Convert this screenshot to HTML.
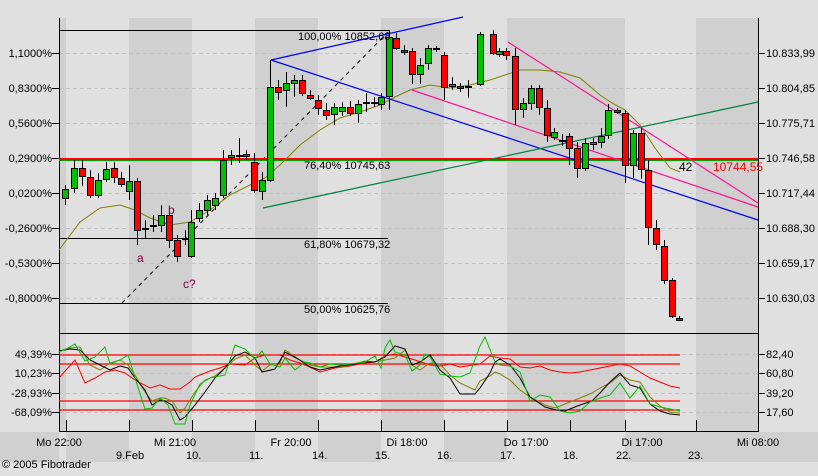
<!DOCTYPE html><html><head><style>
body{margin:0;background:#e0e0e0;width:818px;height:471px;overflow:hidden;font-family:"Liberation Sans",sans-serif}
svg text{font-family:"Liberation Sans",sans-serif;font-size:11px;fill:#000}
svg text.p{fill:#800040;font-size:12px}
</style></head><body>
<svg id="s" width="818" height="471" xmlns="http://www.w3.org/2000/svg">
<rect width="818" height="471" fill="#e0e0e0"/>
<g fill="#d0d0d0">
<rect x="59" y="18" width="7" height="414"/><rect x="129" y="18" width="63" height="414"/><rect x="255" y="18" width="63" height="414"/><rect x="381" y="18" width="63" height="414"/><rect x="507" y="18" width="118" height="414"/><rect x="696" y="18" width="62" height="414"/>
<rect x="0" y="432" width="59" height="30"/><rect x="66" y="432" width="63" height="30"/><rect x="192" y="432" width="63" height="30"/><rect x="318" y="432" width="63" height="30"/><rect x="444" y="432" width="63" height="30"/><rect x="625" y="432" width="71" height="30"/><rect x="696" y="432" width="122" height="30"/>
</g>
<g stroke="#c4c4c4" stroke-dasharray="4,3" stroke-width="1">
<path d="M59 53.5H758M59 88.5H758M59 123.5H758M59 158.5H758M59 193.5H758M59 228.5H758M59 263.5H758M59 298.5H758M59 354.5H758M59 373.5H758M59 393.5H758M59 412.5H758"/>
</g>
<g stroke="#000" fill="none">
<path d="M59.5 18V432M758.5 18V432M59 333.5H758M59 431.5H758"/>
<path d="M59 30.5H390M59 238.5H388M59 303.5H388M59 158.5H388"/>
<path d="M66.5 420V432M129.5 420V432M192.5 420V432M255.5 420V432M318.5 420V432M381.5 420V432M444.5 420V432M507.5 420V432M570.5 420V432M625.5 420V432M696.5 420V432"/>
<path d="M52 53.5H59M52 88.5H59M52 123.5H59M52 158.5H59M52 193.5H59M52 228.5H59M52 263.5H59M52 298.5H59M758 53.5H765M758 88.5H765M758 123.5H765M758 158.5H765M758 193.5H765M758 228.5H765M758 263.5H765M758 298.5H765M52 354.5H59M52 373.5H59M52 393.5H59M52 412.5H59M758 354.5H765M758 373.5H765M758 393.5H765M758 412.5H765"/>
<path d="M122 303L390 30" stroke-dasharray="4,4"/>
</g>
<path d="M59 160.5H758" stroke="#00a000" stroke-width="1"/>
<path d="M59 159H758" stroke="#ff0000" stroke-width="2"/>
<path d="M59 250L80 222L100 208L120 205L135 210L150 218L170 225L190 222L210 210L230 195L250 185L265 178L280 165L300 145L320 130L340 118L360 112L380 105L395 97L410 90L430 85L450 88L470 85L490 80L505 75L520 70L540 70L560 72L580 78L600 95L612 103L625 110L640 125L655 148L670 168L680 172" stroke="#808000" fill="none"/>
<g fill="none" stroke-width="1.2">
<path d="M271 60L463 17M271 60L758 220" stroke="#0000ff"/>
<path d="M412 90L758 207M508 42L758 203" stroke="#ff1493"/>
<path d="M263 208L758 102" stroke="#008040"/>
</g>
<g id="c"></g>
<text class="p" x="137" y="262">a</text><text class="p" x="168" y="214">b</text><text class="p" x="183" y="288">c?</text>
<text x="298" y="40">100,00% 10852,68</text><text x="304" y="169">76,40% 10745,63</text><text x="304" y="248">61,80% 10679,32</text><text x="304" y="313">50,00% 10625,76</text>
<text x="679" y="171" style="font-size:12px">42</text><text x="713" y="171" style="font-size:12px;fill:#ff0000">10744,55</text>
<g text-anchor="end"><text x="52" y="57">1,1000%</text><text x="52" y="92">0,8300%</text><text x="52" y="127">0,5600%</text><text x="52" y="162">0,2900%</text><text x="52" y="197">0,0200%</text><text x="52" y="232">-0,2600%</text><text x="52" y="267">-0,5300%</text><text x="52" y="302">-0,8000%</text>
<text x="52" y="358">49,39%</text><text x="52" y="377">10,23%</text><text x="52" y="397">-28,93%</text><text x="52" y="416">-68,09%</text></g>
<g><text x="766" y="57">10.833,99</text><text x="766" y="92">10.804,85</text><text x="766" y="127">10.775,71</text><text x="766" y="162">10.746,58</text><text x="766" y="197">10.717,44</text><text x="766" y="232">10.688,30</text><text x="766" y="267">10.659,17</text><text x="766" y="302">10.630,03</text>
<text x="766" y="358">82,40</text><text x="766" y="377">60,80</text><text x="766" y="397">39,20</text><text x="766" y="416">17,60</text></g>
<g stroke="#ff0000" stroke-width="1.3"><path d="M59 355H680M59 364H680M59 401H680M59 410H680"/></g>
<g fill="none" stroke-width="1">
<path d="M59 378L66 370L75 360L85 383L95 378L105 372L115 370L125 373L135 380L150 388L160 385L170 389L180 389L190 382L195 377L200 375L210 371L220 368L230 364L245 365L255 358L265 355L280 355L290 360L300 363L310 367L320 372L335 368L350 366L365 363L375 362L385 356L395 354L405 357L415 360L430 365L440 366L450 364L460 367L480 364L490 356L500 358L510 359L520 367L530 368L540 366L550 370L560 372L570 373L580 372L590 370L600 368L610 366L620 364L630 366L640 372L650 378L660 382L670 386L680 388" stroke="#ff0000"/>
<path d="M59 351L70 348L80 347L90 365L100 370L110 363L120 360L128 365L135 375L145 392L152 401L160 398L165 398L172 401L180 413L185 408L195 392L205 380L215 376L225 368L235 359L245 355L255 365L262 371L270 365L280 363L285 350L300 360L310 365L320 367L340 367L350 365L365 361L375 362L385 360L395 358L405 350L412 365L420 370L430 363L440 364L450 375L460 383L475 390L480 381L490 376L495 372L500 374L510 380L520 390L530 397L545 405L555 408L565 404L580 398L592 393L600 388L610 383L620 375L630 380L640 382L650 397L660 406L670 412L680 413" stroke="#808000"/>
<path d="M59 351L70 349L80 350L90 360L100 365L110 370L120 366L128 368L135 378L145 390L152 405L160 400L165 401L172 405L180 420L185 417L195 405L205 392L215 378L225 368L235 356L245 352L255 358L262 372L275 369L285 352L298 359L310 367L320 370L340 366L355 364L365 362L375 362L385 357L395 346L405 349L412 365L420 362L430 355L440 370L450 378L460 394L475 394L480 388L490 373L495 362L500 359L510 365L520 378L530 397L545 407L556 410L565 411L580 405L592 401L600 393L610 382L620 373L630 385L640 388L650 404L660 411L670 414L680 415" stroke="#000"/>
<path d="M59 352L66 349L75 344L85 361L95 357L105 347L110 364L120 360L128 355L135 378L145 409L152 408L160 398L168 405L175 424L185 424L190 405L200 384L210 378L225 375L235 345L245 349L255 359L262 351L270 364L280 367L285 358L295 370L305 362L310 363L320 367L330 364L340 365L350 364L365 362L375 356L381 368L385 348L390 340L395 352L405 355L412 371L420 365L425 354L430 357L440 374L450 376L460 377L470 373L480 346L485 337L495 362L500 365L510 366L520 372L530 401L540 395L550 397L560 411L570 413L580 411L590 402L600 398L610 395L620 383L630 398L640 386L650 404L660 407L670 409L680 411" stroke="#00c000"/>
</g>
<g text-anchor="middle"><text x="59" y="446">Mo 22:00</text><text x="175" y="446">Mi 21:00</text><text x="291" y="446">Fr 20:00</text><text x="407" y="446">Di 18:00</text><text x="526" y="446">Do 17:00</text><text x="642" y="446">Di 17:00</text><text x="758" y="446">Mi 08:00</text></g>
<g><text x="116" y="459">9.Feb</text><text x="186" y="459">10.</text><text x="249" y="459">11.</text><text x="312" y="459">14.</text><text x="375" y="459">15.</text><text x="437" y="459">16.</text><text x="500" y="459">17.</text><text x="563" y="459">18.</text><text x="616" y="459">22.</text><text x="688" y="459">23.</text></g>
<text x="2" y="468">© 2005 Fibotrader</text>
</svg>
<script>
var d=[[65,189,198,185,205,'g'],[74,168,188,160,193,'g'],[82,168,176,160,186,'r'],[90,177,195,170,198,'r'],[98,180,195,173,198,'g'],[106,169,179,162,182,'g'],[114,168,177,162,183,'r'],[121,178,184,172,187,'r'],[129,181,191,165,200,'g'],[137,181,230,178,245,'r'],[145,228,229,220,238,'r'],[153,225,226,215,232,'g'],[161,215,225,205,232,'g'],[169,215,240,212,248,'r'],[177,240,256,235,262,'r'],[185,238,239,230,245,'g'],[191,222,256,210,258,'g'],[199,210,218,203,222,'g'],[207,200,210,195,215,'g'],[215,198,205,193,210,'g'],[223,160,195,150,198,'g'],[231,155,157,150,165,'g'],[239,155,156,138,163,'g'],[246,154,156,150,160,'r'],[254,162,190,153,193,'r'],[262,180,191,172,200,'g'],[270,87,180,60,182,'g'],[278,87,92,80,100,'r'],[286,83,90,72,107,'g'],[294,80,83,75,97,'g'],[302,80,93,75,96,'r'],[310,95,98,90,100,'r'],[318,100,108,95,115,'r'],[326,110,115,103,120,'r'],[334,107,114,103,125,'g'],[342,107,111,102,116,'g'],[350,107,113,101,116,'r'],[358,104,113,100,123,'g'],[366,102,103,93,112,'r'],[374,102,103,97,107,'r'],[381,97,104,93,110,'g'],[389,37,96,30,110,'g'],[396,38,48,33,50,'r'],[404,50,52,45,55,'r'],[412,51,74,48,84,'r'],[420,65,74,58,84,'g'],[428,48,63,45,70,'g'],[436,48,49,46,52,'r'],[444,55,87,52,100,'r'],[452,84,86,77,90,'g'],[460,86,88,83,92,'r'],[468,86,87,80,98,'g'],[480,34,84,32,86,'g'],[493,34,53,30,55,'r'],[499,51,54,48,57,'g'],[506,51,55,48,60,'r'],[515,56,109,48,125,'r'],[523,103,109,98,118,'g'],[531,88,103,85,110,'g'],[539,88,107,85,115,'r'],[547,108,135,100,142,'r'],[554,132,137,128,140,'g'],[562,140,141,134,146,'r'],[569,136,148,133,165,'r'],[577,148,168,142,178,'r'],[585,143,168,138,171,'g'],[593,142,144,138,150,'g'],[601,136,142,128,148,'g'],[608,110,135,104,139,'g'],[617,110,112,108,114,'r'],[625,113,165,110,183,'r'],[633,133,165,130,178,'g'],[641,133,169,128,179,'r'],[648,170,227,160,245,'r'],[656,228,244,220,250,'r'],[664,246,280,240,284,'r'],[672,280,316,278,318,'r'],[679,318,320,316,321,'r']];
var s='';d.forEach(function(c){var x=c[0];s+='<line x1="'+(x+.5)+'" x2="'+(x+.5)+'" y1="'+c[3]+'" y2="'+c[4]+'" stroke="#000"/>';s+='<rect x="'+(x-2.5)+'" y="'+(c[1]+.5)+'" width="6" height="'+Math.max(1,c[2]-c[1])+'" fill="'+(c[5]=='g'?'#00c000':'#ff0000')+'" stroke="#000"/>';});
document.getElementById('c').innerHTML=s;
</script>
</body></html>
